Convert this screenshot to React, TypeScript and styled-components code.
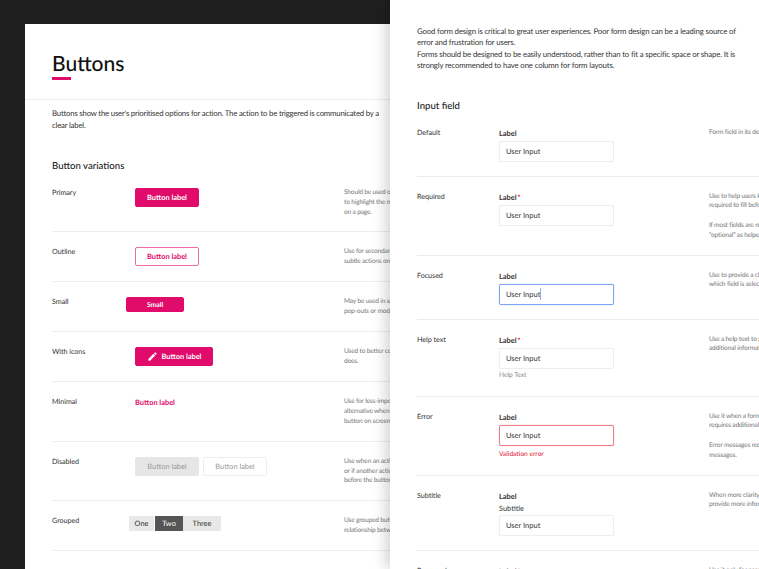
import React from "react";
import styled, { createGlobalStyle } from "styled-components";
import { MdEdit } from "react-icons/md";

const GlobalStyle = createGlobalStyle`
  * { box-sizing: border-box; }
  html, body { margin: 0; padding: 0; background: #1f1f1f; }
  body { font-family: Lato, "Open Sans", sans-serif; text-rendering: geometricPrecision; }
  button { text-rendering: geometricPrecision; }
`;

const pink = "#e00b6b";

const Page = styled.div`
  display: flex;
  width: 759px;
  height: 569px;
  overflow: hidden;
  background: #1f1f1f;
`;

const LeftColumn = styled.div`
  width: 390px;
  flex: none;
  padding: 24px 0 0 25px;
`;

const Sheet = styled.section`
  height: 100%;
  background: #fff;
  overflow: hidden;
`;

const TitleBlock = styled.header`
  height: 76px;
  padding: 27px 0 0 27px;
  border-bottom: 1px solid #ececec;
`;

const Title = styled.h1`
  margin: 0;
  font-size: 21px;
  line-height: 26px;
  font-weight: 500;
  color: #111;
`;

const TitleBar = styled.div`
  width: 19px;
  height: 3px;
  background: ${pink};
`;

const LeftBody = styled.div`
  padding: 8px 0 0 27px;
  width: 500px;
`;

const Intro = styled.p`
  margin: 0;
  width: 329px;
  font-size: 7.8px;
  letter-spacing: -0.21px;
  line-height: 11.5px;
  color: #333;
`;

const SectionTitle = styled.h2<{ $top: number }>`
  margin: ${(p) => p.$top}px 0 0;
  font-size: 9.6px;
  line-height: 13px;
  font-weight: 500;
  color: #222;
`;

const Row = styled.div<{ $cols: string }>`
  display: grid;
  grid-template-columns: ${(p) => p.$cols};
  min-height: 50px;
  padding: 15px 0 14px;
  border-bottom: 1px solid #ececec;

  &:first-child {
    padding-top: 14px;
  }
`;

const RowName = styled.div`
  font-size: 7.2px;
  letter-spacing: -0.05px;
  line-height: 9px;
  color: #333;
`;

const Description = styled.p`
  margin: 0;
  font-size: 6.6px;
  letter-spacing: -0.18px;
  line-height: 9.8px;
  color: #777;
  white-space: nowrap;
`;

const Controls = styled.div<{ $shift?: number }>`
  display: flex;
  gap: 4px;
  margin-left: ${(p) => p.$shift ?? 0}px;
`;

const Button = styled.button<{ $variant?: "primary" | "outline" | "disabled" | "disabledOutline" | "minimal"; $small?: boolean }>`
  display: inline-flex;
  align-items: center;
  justify-content: center;
  gap: 4px;
  height: ${(p) => (p.$small ? 15 : 19)}px;
  width: ${(p) => (p.$small ? "58px" : "64px")};
  padding: 0;
  border-radius: 2px;
  font-family: inherit;
  font-size: ${(p) => (p.$small ? 6.8 : 7.4)}px;
  font-weight: 700;
  white-space: nowrap;
  border: 1px solid ${pink};
  background: ${pink};
  color: #fff;
  ${(p) => p.$variant === "outline" && `background: #fff; color: ${pink}; border-color: #f06aa5;`}
  ${(p) => p.$variant === "disabled" && `background: #e6e6e6; color: #999; border-color: #e6e6e6; font-weight: 400;`}
  ${(p) => p.$variant === "disabledOutline" && `background: #fff; color: #999; border-color: #eee; font-weight: 400;`}
  ${(p) => p.$variant === "minimal" && `background: none; border: none; color: ${pink}; height: 10px; width: 40px; justify-content: flex-start;`}
`;

const IconButton = styled(Button)`
  width: 78px;
`;

const Group = styled.div`
  display: flex;
  height: 15px;
`;

const GroupItem = styled.span<{ $active?: boolean; $width: number }>`
  display: flex;
  align-items: center;
  justify-content: center;
  width: ${(p) => p.$width}px;
  font-size: 7.4px;
  background: ${(p) => (p.$active ? "#555" : "#e8e8e8")};
  color: ${(p) => (p.$active ? "#fff" : "#333")};
  border-left: ${(p) => (p.$active ? "1px solid #fff" : "none")};
`;

const RightPanel = styled.section`
  flex: 1;
  min-width: 0;
  position: relative;
  z-index: 1;
  background: #fff;
  overflow: hidden;
  box-shadow: -5px 0 12px rgba(0, 0, 0, 0.16);
  padding: 26px 0 0 27px;
`;

const FormIntro = styled.p`
  margin: 0;
  width: 320px;
  font-size: 7.8px;
  letter-spacing: -0.15px;
  line-height: 11.4px;
  color: #333;
`;

const FieldLabel = styled.div`
  height: 13px;
  font-size: 7.4px;
  line-height: 11px;
  font-weight: 700;
  color: #333;
`;

const Required = styled.span`
  color: #e0102f;
  margin-left: 1px;
`;

const SubtitleText = styled.div`
  height: 11px;
  font-size: 7.4px;
  line-height: 10px;
  color: #333;
`;

const inputBorders = { focus: "#7fa4f5", error: "#ef7f87", none: "#eeeeee" };

const InputBox = styled.div<{ $state?: "focus" | "error" }>`
  display: flex;
  align-items: center;
  width: 115px;
  height: 21px;
  padding-left: 6px;
  border-radius: 2px;
  border-width: 1px;
  border-style: solid;
  border-color: ${(p) => inputBorders[p.$state ?? "none"]};
  box-shadow: 0 0 1px ${(p) => inputBorders[p.$state ?? "none"]};
  font-size: 7.5px;
  color: #333;
  background: #fff;
`;

const Caret = styled.span`
  width: 1px;
  height: 12px;
  background: #8fb0f0;
`;

const Note = styled.div<{ $error?: boolean }>`
  height: ${(p) => (p.$error ? 12 : 13)}px;
  font-size: 6.6px;
  line-height: ${(p) => (p.$error ? 17 : 13)}px;
  color: ${(p) => (p.$error ? "#e0102f" : "#888")};
`;

const RowsWrap = styled.div<{ $top: number }>`
  width: 500px;
  margin-top: ${(p) => p.$top}px;
`;

const btnCols = "83px 209px 1fr";
const formCols = "82px 210px 1fr";

const Lines: React.FC<{ lines: string[] }> = ({ lines }) => (
  <Description>
    {lines.map((l, i) => (
      <React.Fragment key={i}>
        {l}
        <br />
      </React.Fragment>
    ))}
  </Description>
);

const Field: React.FC<{ state?: "focus" | "error" }> = ({ state }) => (
  <InputBox $state={state}>
    User Input
    {state === "focus" && <Caret />}
  </InputBox>
);

export default function App() {
  return (
    <Page>
      <GlobalStyle />
      <LeftColumn>
        <Sheet>
          <TitleBlock>
            <Title>Buttons</Title>
            <TitleBar />
          </TitleBlock>
          <LeftBody>
            <Intro>
              Buttons show the user's prioritised options for action. The action to be triggered is communicated by a clear label.
            </Intro>
            <SectionTitle $top={29}>Button variations</SectionTitle>
            <RowsWrap $top={1}>
              <Row $cols={btnCols}>
                <RowName>Primary</RowName>
                <Controls><Button>Button label</Button></Controls>
                <Lines lines={["Should be used once per page", "to highlight the main action", "on a page."]} />
              </Row>
              <Row $cols={btnCols}>
                <RowName>Outline</RowName>
                <Controls><Button $variant="outline">Button label</Button></Controls>
                <Lines lines={["Use for secondary actions or", "subtle actions on a page."]} />
              </Row>
              <Row $cols={btnCols}>
                <RowName>Small</RowName>
                <Controls $shift={-9}><Button $small>Small</Button></Controls>
                <Lines lines={["May be used in small spaces,", "pop-outs or modals."]} />
              </Row>
              <Row $cols={btnCols}>
                <RowName>With icons</RowName>
                <Controls>
                  <IconButton><MdEdit size={11} />Button label</IconButton>
                </Controls>
                <Lines lines={["Used to better convey what it", "does."]} />
              </Row>
              <Row $cols={btnCols}>
                <RowName>Minimal</RowName>
                <Controls><Button $variant="minimal">Button label</Button></Controls>
                <Lines lines={["Use for less-important actions", "alternative when a primary", "button on screen."]} />
              </Row>
              <Row $cols={btnCols}>
                <RowName>Disabled</RowName>
                <Controls>
                  <Button $variant="disabled">Button label</Button>
                  <Button $variant="disabledOutline">Button label</Button>
                </Controls>
                <Lines lines={["Use when an action is unavailable", "or if another action is required", "before the button is enabled."]} />
              </Row>
              <Row $cols={btnCols}>
                <RowName>Grouped</RowName>
                <Controls $shift={-6}>
                  <Group>
                    <GroupItem $width={25}>One</GroupItem>
                    <GroupItem $width={29} $active>Two</GroupItem>
                    <GroupItem $width={38}>Three</GroupItem>
                  </Group>
                </Controls>
                <Lines lines={["Use grouped buttons to show a", "relationship between actions."]} />
              </Row>
            </RowsWrap>
          </LeftBody>
        </Sheet>
      </LeftColumn>
      <RightPanel>
        <FormIntro>
          Good form design is critical to great user experiences. Poor form design can be a leading source of error and frustration for users.
          <br />
          Forms should be designed to be easily understood, rather than to fit a specific space or shape. It is strongly recommended to have one column for form layouts.
        </FormIntro>
        <SectionTitle $top={28}>Input field</SectionTitle>
        <RowsWrap $top={1}>
          <Row $cols={formCols}>
            <RowName>Default</RowName>
            <div><FieldLabel>Label</FieldLabel><Field /></div>
            <Lines lines={["Form field in its default state."]} />
          </Row>
          <Row $cols={formCols}>
            <RowName>Required</RowName>
            <div><FieldLabel>Label<Required>*</Required></FieldLabel><Field /></div>
            <Lines lines={["Use to help users know it is", "required to fill before submit.", "\u00a0", "If most fields are required, mark", "\u201coptional\u201d as helper text."]} />
          </Row>
          <Row $cols={formCols}>
            <RowName>Focused</RowName>
            <div><FieldLabel>Label</FieldLabel><Field state="focus" /></div>
            <Lines lines={["Use to provide a clear indication of", "which field is selected."]} />
          </Row>
          <Row $cols={formCols}>
            <RowName>Help text</RowName>
            <div><FieldLabel>Label<Required>*</Required></FieldLabel><Field /><Note>Help Text</Note></div>
            <Lines lines={["Use a help text to provide", "additional information."]} />
          </Row>
          <Row $cols={formCols}>
            <RowName>Error</RowName>
            <div><FieldLabel>Label</FieldLabel><Field state="error" /><Note $error>Validation error</Note></div>
            <Lines lines={["Use it when a form field", "requires additional attention.", "\u00a0", "Error messages require clear", "messages."]} />
          </Row>
          <Row $cols={formCols}>
            <RowName>Subtitle</RowName>
            <div><FieldLabel>Label</FieldLabel><SubtitleText>Subtitle</SubtitleText><Field /></div>
            <Lines lines={["When more clarity is needed,", "provide more information."]} />
          </Row>
          <Row $cols={formCols}>
            <RowName>Password</RowName>
            <div><FieldLabel>Label<Required>*</Required></FieldLabel><Field /></div>
            <Lines lines={["Use it only for passwords."]} />
          </Row>
        </RowsWrap>
      </RightPanel>
    </Page>
  );
}
